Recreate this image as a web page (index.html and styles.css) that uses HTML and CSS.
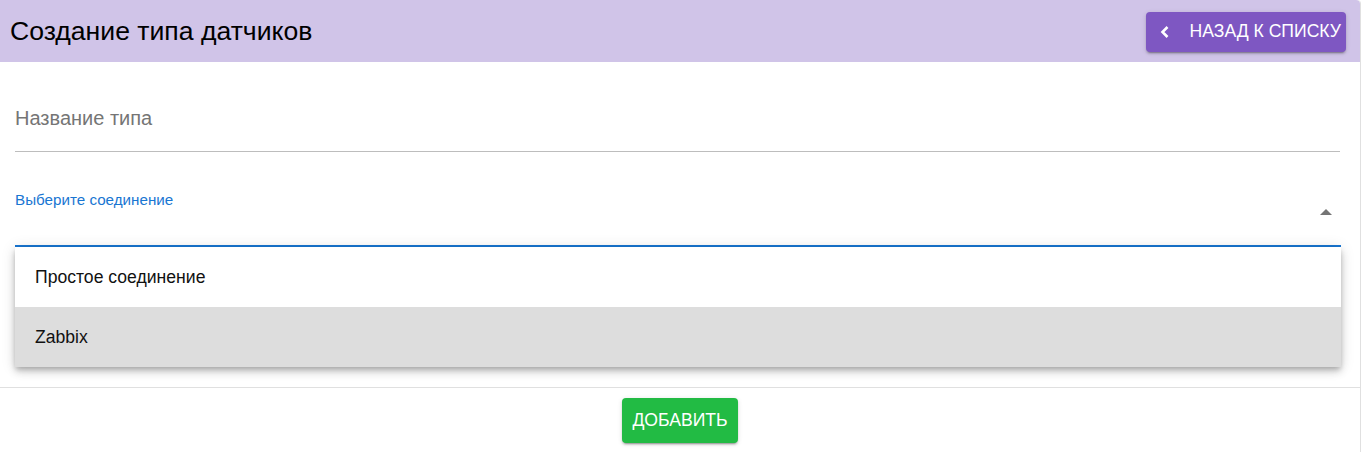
FILE: index.html
```html
<!DOCTYPE html>
<html lang="ru">
<head>
    <meta charset="UTF-8">
    <meta name="viewport" content="width=device-width, initial-scale=1.0">
    <title>Создание типа датчиков</title>
    <link rel="stylesheet" href="styles.css">
</head>
<body>
    <div class="card">
        <!-- Header -->
        <div class="card-header">
            <h1 class="title">Создание типа датчиков</h1>
            <button class="back-btn">
                <svg class="back-icon" viewBox="0 0 10 14" width="10" height="14">
                    <polyline points="7.5,2 2.5,7 7.5,12" fill="none" stroke="#fff" stroke-width="2.6"/>
                </svg>
                Назад к списку
            </button>
        </div>

        <!-- Form -->
        <div class="card-body">
            <div class="field">
                <input type="text" class="text-input" placeholder="Название типа">
            </div>

            <div class="select-field">
                <label class="select-label">Выберите соединение</label>
                <div class="select-box">
                    <span class="arrow"></span>
                </div>
                <ul class="menu">
                    <li class="menu-item">Простое соединение</li>
                    <li class="menu-item active">Zabbix</li>
                </ul>
            </div>
        </div>

        <div class="card-footer">
            <button class="add-btn">Добавить</button>
        </div>
    </div>
</body>
</html>
```

FILE: styles.css
```css
body {
    margin: 0;
    padding: 0;
    font-family: "Liberation Sans", Arial, sans-serif;
    background: #fff;
}

.card {
    width: 1360px;
    height: 452px;
    border-right: 1px solid #e0e0e0;
    border-top-right-radius: 4px;
    display: flex;
    flex-direction: column;
}

.card-header {
    height: 62px;
    background: #d0c4e8;
    border-top-right-radius: 4px;
    display: flex;
    align-items: center;
    justify-content: space-between;
    padding: 0 14px 0 10px;
}

.title {
    margin: 0;
    font-size: 26.6px;
    font-weight: normal;
    color: #000;
}

.back-btn {
    display: flex;
    align-items: center;
    gap: 20px;
    height: 40px;
    padding: 0 5px 0 14px;
    margin-top: 1px;
    background: #7e57c2;
    color: #fff;
    border: none;
    border-radius: 4px;
    font-family: "Liberation Sans", Arial, sans-serif;
    font-size: 17.6px;
    text-transform: uppercase;
    box-shadow: 0 3px 1px -2px rgba(0,0,0,0.2), 0 2px 2px 0 rgba(0,0,0,0.14), 0 1px 5px 0 rgba(0,0,0,0.12);
    cursor: pointer;
}

.back-icon {
    display: block;
}

.card-body {
    padding: 0 20px 0 15px;
    height: 325px;
    border-bottom: 1px solid #e0e0e0;
}

.field {
    padding-top: 24px;
}

.text-input {
    display: block;
    width: 100%;
    height: 66px;
    border: none;
    border-bottom: 1px solid #bdbdbd;
    padding: 0;
    font-family: "Liberation Sans", Arial, sans-serif;
    font-size: 20px;
    outline: none;
    box-sizing: border-box;
}

.text-input::placeholder {
    color: #757575;
}

.select-field {
    position: relative;
    padding-top: 39px;
}

.select-label {
    display: block;
    height: 17px;
    line-height: 17px;
    font-size: 15.2px;
    color: #1976d2;
}

.select-box {
    height: 37px;
    border-bottom: 2px solid #1976d2;
    position: relative;
    margin-right: -1px;
}

.arrow {
    position: absolute;
    right: 9px;
    top: 1px;
    width: 0;
    height: 0;
    border-left: 6px solid transparent;
    border-right: 6px solid transparent;
    border-bottom: 6px solid #757575;
}

.menu {
    position: absolute;
    left: 0;
    right: -1px;
    top: 95px;
    margin: 0;
    padding: 0;
    list-style: none;
    background: #fff;
    box-shadow: 0 3px 5px -1px rgba(0,0,0,0.2), 0 5px 8px 0 rgba(0,0,0,0.14), 0 1px 14px 0 rgba(0,0,0,0.12);
}

.menu-item {
    height: 60px;
    display: flex;
    align-items: center;
    padding-left: 20px;
    font-family: "Liberation Sans", Arial, sans-serif;
    font-size: 17.6px;
    color: #111;
}

.menu-item.active {
    background: #dddddd;
}

.card-footer {
    display: flex;
    justify-content: center;
    padding-top: 10px;
}

.add-btn {
    height: 45px;
    padding: 0 10px;
    background: #22bb44;
    color: #fff;
    border: none;
    border-radius: 4px;
    font-family: "Liberation Sans", Arial, sans-serif;
    font-size: 17.6px;
    text-transform: uppercase;
    box-shadow: 0 3px 1px -2px rgba(0,0,0,0.2), 0 2px 2px 0 rgba(0,0,0,0.14), 0 1px 5px 0 rgba(0,0,0,0.12);
    cursor: pointer;
}
```
